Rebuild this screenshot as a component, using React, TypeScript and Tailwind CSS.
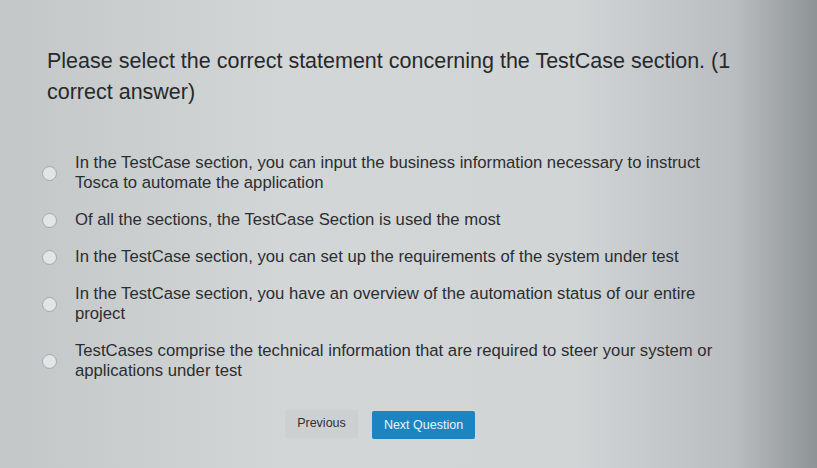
import { useState } from "react"

const opciones = [
    "In the TestCase section, you can input the business information necessary to instruct Tosca to automate the application",
    "Of all the sections, the TestCase Section is used the most",
    "In the TestCase section, you can set up the requirements of the system under test",
    "In the TestCase section, you have an overview of the automation status of our entire project",
    "TestCases comprise the technical information that are required to steer your system or applications under test",
]

function Opcion({ texto, activa, onSelect }: { texto: string, activa: boolean, onSelect: () => void }) {
    return (
        <label className="flex items-center gap-x-[18px] cursor-pointer" onClick={onSelect}>
            <span className="w-[15px] h-[15px] shrink-0 rounded-full border border-[#a3a8ab] bg-[#e2e4e5] flex items-center justify-center">
                {activa && <span className="w-[7px] h-[7px] rounded-full bg-[#2a2d30]" />}
            </span>
            <span className="w-[660px] text-[16.7px] leading-[20px] text-[#2b2e31]">{texto}</span>
        </label>
    )
}

export default function App() {
    const [seleccion, setSeleccion] = useState<number | null>(null)

    return (
        <div className="w-[817px] h-[468px] overflow-hidden bg-[linear-gradient(90deg,#c3c7c8_0%,#d3d6d7_35%,#d2d5d6_70%,#b9bdbf_90%,#8e9396_100%)] font-['Liberation_Sans',Arial,sans-serif]">
            <div className="pt-[46px] pl-[47px]">
                <p className="w-[720px] text-[21.5px] leading-[31px] text-[#26292c]">
                    Please select the correct statement concerning the TestCase section. (1 correct answer)
                </p>
            </div>

            <div className="mt-[45px] pl-[42px] flex flex-col gap-y-[17px]">
                {opciones.map((texto, i) => (
                    <Opcion key={i} texto={texto} activa={seleccion === i} onSelect={() => setSeleccion(i)} />
                ))}
            </div>

            <div className="mt-[27px] pl-[285px] flex items-center gap-x-[14px]">
                <button type="button" className="w-[73px] h-[28px] bg-[#cdd0d1] text-[#2d3033] text-[12.5px] rounded-[2px]">
                    Previous
                </button>
                <button type="button" className="w-[103px] h-[28px] mt-[3px] bg-[#1c85c1] text-[#e9f3f9] text-[12.5px] rounded-[2px]">
                    Next Question
                </button>
            </div>
        </div>
    )
}
